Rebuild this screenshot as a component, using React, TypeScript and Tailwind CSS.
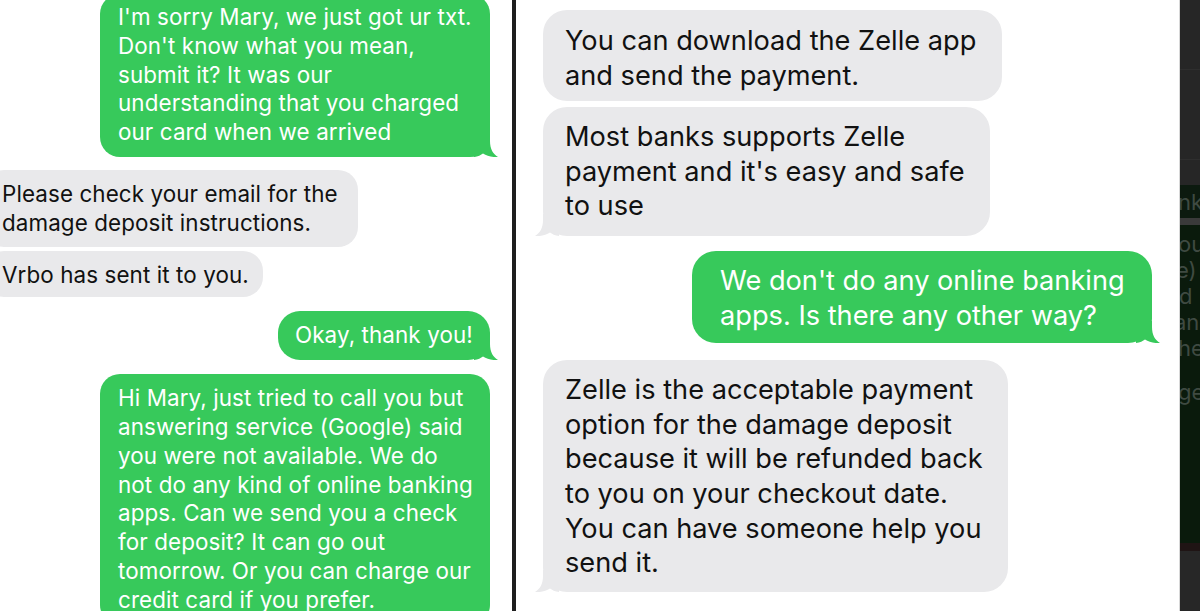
import React from "react";

const GREEN = "#37c95b";
const GRAY = "#e9e9eb";

function Tail({ color, side }: { color: string; side: "left" | "right" }) {
  return (
    <svg
      width="24"
      height="22"
      viewBox="0 0 24 22"
      className={
        side === "right"
          ? "absolute bottom-0 right-[-8px]"
          : "absolute bottom-0 left-[-8px] -scale-x-100"
      }
    >
      <path
        d="M0,0 H16 V6 C16,14 19,19 24,22 C18,22.5 13,21 9,18.5 C7,20 4,21.5 0,22 Z"
        fill={color}
      />
    </svg>
  );
}

function Lines({ lines }: { lines: string[] }) {
  return (
    <>
      {lines.map((l, i) => (
        <div key={i} className="whitespace-nowrap">
          {l}
        </div>
      ))}
    </>
  );
}

export default function App() {
  const leftFont = "font-['Inter','Liberation_Sans',sans-serif] text-[22.4px] leading-[28.8px] tracking-[0.1px]";
  const rightFont = "font-['Inter','Liberation_Sans',sans-serif] text-[27.2px] leading-[34.6px] tracking-[0px]";
  return (
    <div className="w-[1200px] h-[611px] overflow-hidden bg-white flex">
      {/* Left panel */}
      <div className={`w-[512px] h-full overflow-hidden flex flex-col ${leftFont}`}>
        <div
          className="relative self-end mr-[22px] mt-[-6px] w-[390px] rounded-[20px] pl-[18px] pt-[9px] pb-[10px] text-white"
          style={{ background: GREEN }}
        >
          <Lines
            lines={[
              "I'm sorry Mary, we just got ur txt.",
              "Don't know what you mean,",
              "submit it? It was our",
              "understanding that you charged",
              "our card when we arrived",
            ]}
          />
          <Tail color={GREEN} side="right" />
        </div>

        <div
          className="relative self-start ml-[-16px] mt-[13px] w-[374px] rounded-[20px] pl-[18px] pt-[10px] pb-[9px] text-[#111]"
          style={{ background: GRAY }}
        >
          <Lines lines={["Please check your email for the", "damage deposit instructions."]} />
        </div>

        <div
          className="relative self-start ml-[-16px] mt-[4px] w-[279px] rounded-[20px] pl-[18px] pt-[10px] pb-[8px] text-[#111]"
          style={{ background: GRAY }}
        >
          <Lines lines={["Vrbo has sent it to you."]} />
        </div>

        <div
          className="relative self-end mr-[22px] mt-[14px] w-[212px] rounded-[22px] pl-[17px] pt-[10px] pb-[10px] text-white"
          style={{ background: GREEN }}
        >
          <Lines lines={["Okay, thank you!"]} />
          <Tail color={GREEN} side="right" />
        </div>

        <div
          className="relative self-end mr-[22px] mt-[14px] w-[390px] rounded-[20px] pl-[18px] pt-[10px] pb-[10px] text-white"
          style={{ background: GREEN }}
        >
          <Lines
            lines={[
              "Hi Mary, just tried to call you but",
              "answering service (Google) said",
              "you were not available. We do",
              "not do any kind of online banking",
              "apps. Can we send you a check",
              "for deposit? It can go out",
              "tomorrow. Or you can charge our",
              "credit card if you prefer.",
            ]}
          />
        </div>
      </div>

      {/* Divider */}
      <div className="w-[4px] h-full bg-[#1e1e1e]" />

      {/* Right panel */}
      <div className={`w-[663px] h-full overflow-hidden flex flex-col pt-[10px] ${rightFont}`}>
        <div
          className="relative self-start ml-[27px] w-[459px] rounded-[24px] pl-[22px] pt-[14px] pb-[8px] text-[#111]"
          style={{ background: GRAY }}
        >
          <Lines lines={["You can download the Zelle app", "and send the payment."]} />
        </div>

        <div
          className="relative self-start ml-[27px] mt-[6px] w-[447px] rounded-[24px] pl-[22px] pt-[13px] pb-[12px] text-[#111]"
          style={{ background: GRAY }}
        >
          <Lines lines={["Most banks supports Zelle", "payment and it's easy and safe", "to use"]} />
          <Tail color={GRAY} side="left" />
        </div>

        <div
          className="relative self-end mr-[27px] mt-[15px] w-[460px] rounded-[24px] pl-[28px] pt-[13px] pb-[10px] text-white"
          style={{ background: GREEN }}
        >
          <Lines lines={["We don't do any online banking", "apps. Is there any other way?"]} />
          <Tail color={GREEN} side="right" />
        </div>

        <div
          className="relative self-start ml-[27px] mt-[17px] w-[465px] rounded-[24px] pl-[22px] pt-[13px] pb-[11px] text-[#111]"
          style={{ background: GRAY }}
        >
          <Lines
            lines={[
              "Zelle is the acceptable payment",
              "option for the damage deposit",
              "because it will be refunded back",
              "to you on your checkout date.",
              "You can have someone help you",
              "send it.",
            ]}
          />
          <Tail color={GRAY} side="left" />
        </div>
      </div>

      {/* Right dark strip */}
      <div className="w-[1px] h-full bg-[#d8d8d8]" />
      <div className="flex-1 h-full overflow-hidden flex flex-col font-['Inter',sans-serif] text-[22px] leading-[26px] text-[#3f4a42]">
        <div className="h-[185px] bg-[#262626] flex flex-col">
          <div className="h-[70px] border-b border-[#2e2e2e]" />
          <div className="h-[90px] border-b border-[#2e2e2e]" />
        </div>
        <div className="h-[33px] bg-[#0c1a0f] whitespace-nowrap pt-[4px] ml-[-2px]">nk</div>
        <div className="h-[7px] bg-[#3a3a3a]" />
        <div className="h-[318px] bg-[#0a1a0c] whitespace-nowrap pt-[6px] flex flex-col">
          <div className="ml-[-2px]">ou</div>
          <div className="ml-[-4px]">e) s</div>
          <div className="ml-[-1px]">d</div>
          <div className="ml-[-6px]">an</div>
          <div className="ml-[-2px]">he</div>
          <div className="h-[18px]" />
          <div className="ml-[-2px]">ge</div>
        </div>
        <div className="h-[8px] bg-[#1f1414]" />
        <div className="flex-1 bg-[#272727]" />
      </div>
    </div>
  );
}
